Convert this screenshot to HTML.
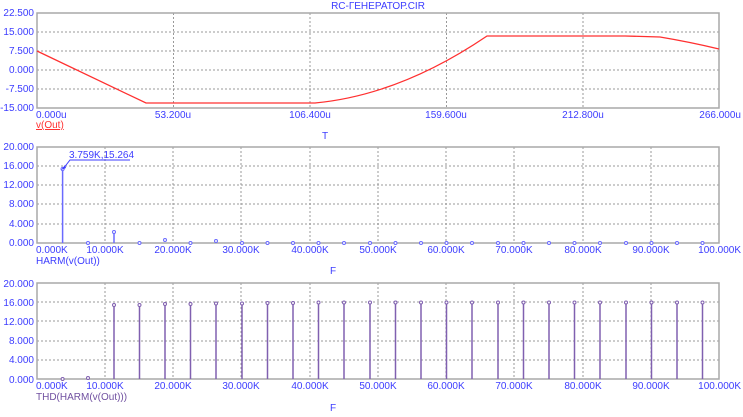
<!DOCTYPE html>
<html><head><meta charset="utf-8"><style>
html,body{margin:0;padding:0;background:#fff;width:743px;height:417px;overflow:hidden}
svg{display:block}
text{font-family:"Liberation Sans","DejaVu Sans",sans-serif;font-size:10px;fill:#3c3cff}
.r{text-anchor:end}.m{text-anchor:middle}
.g{stroke:#999;stroke-width:1;stroke-dasharray:2,2;fill:none}
.f{stroke:#a8a8a8;stroke-width:1.5;fill:none}
</style></head><body>
<svg width="743" height="417" viewBox="0 0 743 417" xmlns="http://www.w3.org/2000/svg">
<text x="378" y="9" class="m">RC-ГЕНЕРАТОР.CIR</text>
<!-- Plot 1 -->
<g id="p1">
<path class="g" d="M173.5 13V108M310 13V108M446.5 13V108M583 13V108M37 32H719M37 51H719M37 70H719M37 89H719"/>
<rect x="37" y="13" width="682" height="95" class="f"/>
<path d="M37 51 L146 103 L315 103 Q400 95 487 36 L625 36 L660 37 Q690 42 719 49" stroke="#ff3030" stroke-width="1.3" fill="none"/>
<text x="34" y="16" class="r">22.500</text>
<text x="34" y="35" class="r">15.000</text>
<text x="34" y="54" class="r">7.500</text>
<text x="34" y="73" class="r">0.000</text>
<text x="34" y="92" class="r">-7.500</text>
<text x="34" y="111" class="r">-15.000</text>
<text x="36" y="118">0.000u</text>
<text x="173" y="118" class="m">53.200u</text>
<text x="310" y="118" class="m">106.400u</text>
<text x="446" y="118" class="m">159.600u</text>
<text x="583" y="118" class="m">212.800u</text>
<text x="741" y="118" class="r">266.000u</text>
<text x="36" y="128" style="fill:#ff3030;text-decoration:underline">v(Out)</text>
<text x="325" y="139" class="m">T</text>
</g>
<!-- Plot 2 -->
<path class="g" d="M105 147V243M173 147V243M241 147V243M310 147V243M378 147V243M446 147V243M514 147V243M583 147V243M651 147V243M37 166H719M37 185H719M37 204H719M37 224H719"/>
<rect x="37" y="147" width="682" height="96" class="f"/>
<g stroke="#6a6aff" fill="none" stroke-width="1.5">
<path d="M62.6 243V169"/>
<path d="M114 243V232"/>
</g>
<g fill="#fff" stroke="#6a6aff" stroke-width="1">
<circle cx="62.6" cy="169" r="1.6"/><circle cx="88" cy="243" r="1.5"/><circle cx="114" cy="232" r="1.5"/><circle cx="139.5" cy="243" r="1.5"/><circle cx="165" cy="240" r="1.5"/><circle cx="190.5" cy="243" r="1.5"/><circle cx="216" cy="241" r="1.5"/><circle cx="242" cy="243" r="1.5"/><circle cx="267.5" cy="243" r="1.5"/><circle cx="293" cy="243" r="1.5"/><circle cx="318.5" cy="243" r="1.5"/><circle cx="344" cy="243" r="1.5"/><circle cx="370" cy="243" r="1.5"/><circle cx="395.5" cy="243" r="1.5"/><circle cx="421" cy="243" r="1.5"/><circle cx="446.5" cy="243" r="1.5"/><circle cx="472" cy="243" r="1.5"/><circle cx="498" cy="243" r="1.5"/><circle cx="523.5" cy="243" r="1.5"/><circle cx="549" cy="243" r="1.5"/><circle cx="574.5" cy="243" r="1.5"/><circle cx="600" cy="243" r="1.5"/><circle cx="626" cy="243" r="1.5"/><circle cx="651.5" cy="243" r="1.5"/><circle cx="677" cy="243" r="1.5"/><circle cx="702.5" cy="243" r="1.5"/>
</g>
<path d="M130 160H70L63 169" stroke="#3c3cff" fill="none"/>
<path d="M61 170l4-5l1 3z" fill="#3c3cff"/>
<text x="69" y="158">3.759K,15.264</text>
<text x="34" y="150" class="r">20.000</text>
<text x="34" y="169" class="r">16.000</text>
<text x="34" y="188" class="r">12.000</text>
<text x="34" y="207" class="r">8.000</text>
<text x="34" y="227" class="r">4.000</text>
<text x="34" y="246" class="r">0.000</text>
<g id="xl2">
<text x="36" y="253">0.000K</text>
<text x="105" y="253" class="m">10.000K</text>
<text x="173" y="253" class="m">20.000K</text>
<text x="241" y="253" class="m">30.000K</text>
<text x="310" y="253" class="m">40.000K</text>
<text x="378" y="253" class="m">50.000K</text>
<text x="446" y="253" class="m">60.000K</text>
<text x="514" y="253" class="m">70.000K</text>
<text x="583" y="253" class="m">80.000K</text>
<text x="651" y="253" class="m">90.000K</text>
<text x="741" y="253" class="r">100.000K</text>
</g>
<text x="36" y="264">HARM(v(Out))</text>
<text x="333" y="274" class="m">F</text>
<!-- Plot 3 -->
<path class="g" d="M105 283V379M173 283V379M241 283V379M310 283V379M378 283V379M446 283V379M514 283V379M583 283V379M651 283V379M37 302H719M37 321H719M37 341H719M37 360H719"/>
<rect x="37" y="283" width="682" height="96" class="f"/>
<g stroke="#8060b0" stroke-width="1.5" fill="none">
<path d="M114 379V305M139.5 379V305M165 379V304M190.5 379V304M216 379V303.5M242 379V303.5M267.5 379V303M293 379V303M318.5 379V302.5M344 379V302.5M370 379V302.5M395.5 379V302.5M421 379V302.5M446.5 379V302.5M472 379V302.5M498 379V302.5M523.5 379V302.5M549 379V302.5M574.5 379V302.5M600 379V302.5M626 379V302.5M651.5 379V302.5M677 379V302.5M702.5 379V302.5"/>
</g>
<g fill="#fff" stroke="#8060b0" stroke-width="1">
<circle cx="62.6" cy="379" r="1.5"/><circle cx="88" cy="378" r="1.5"/><circle cx="114" cy="305" r="1.5"/><circle cx="139.5" cy="305" r="1.5"/><circle cx="165" cy="304" r="1.5"/><circle cx="190.5" cy="304" r="1.5"/><circle cx="216" cy="303.5" r="1.5"/><circle cx="242" cy="303.5" r="1.5"/><circle cx="267.5" cy="303" r="1.5"/><circle cx="293" cy="303" r="1.5"/><circle cx="318.5" cy="302.5" r="1.5"/><circle cx="344" cy="302.5" r="1.5"/><circle cx="370" cy="302.5" r="1.5"/><circle cx="395.5" cy="302.5" r="1.5"/><circle cx="421" cy="302.5" r="1.5"/><circle cx="446.5" cy="302.5" r="1.5"/><circle cx="472" cy="302.5" r="1.5"/><circle cx="498" cy="302.5" r="1.5"/><circle cx="523.5" cy="302.5" r="1.5"/><circle cx="549" cy="302.5" r="1.5"/><circle cx="574.5" cy="302.5" r="1.5"/><circle cx="600" cy="302.5" r="1.5"/><circle cx="626" cy="302.5" r="1.5"/><circle cx="651.5" cy="302.5" r="1.5"/><circle cx="677" cy="302.5" r="1.5"/><circle cx="702.5" cy="302.5" r="1.5"/>
</g>
<text x="34" y="287" class="r">20.000</text>
<text x="34" y="306" class="r">16.000</text>
<text x="34" y="325" class="r">12.000</text>
<text x="34" y="344" class="r">8.000</text>
<text x="34" y="363" class="r">4.000</text>
<text x="34" y="383" class="r">0.000</text>
<text x="36" y="389">0.000K</text>
<text x="105" y="389" class="m">10.000K</text>
<text x="173" y="389" class="m">20.000K</text>
<text x="241" y="389" class="m">30.000K</text>
<text x="310" y="389" class="m">40.000K</text>
<text x="378" y="389" class="m">50.000K</text>
<text x="446" y="389" class="m">60.000K</text>
<text x="514" y="389" class="m">70.000K</text>
<text x="583" y="389" class="m">80.000K</text>
<text x="651" y="389" class="m">90.000K</text>
<text x="741" y="389" class="r">100.000K</text>
<text x="36" y="400" style="fill:#7050a0">THD(HARM(v(Out)))</text>
<text x="333" y="411" class="m">F</text>
</svg>
</body></html>
